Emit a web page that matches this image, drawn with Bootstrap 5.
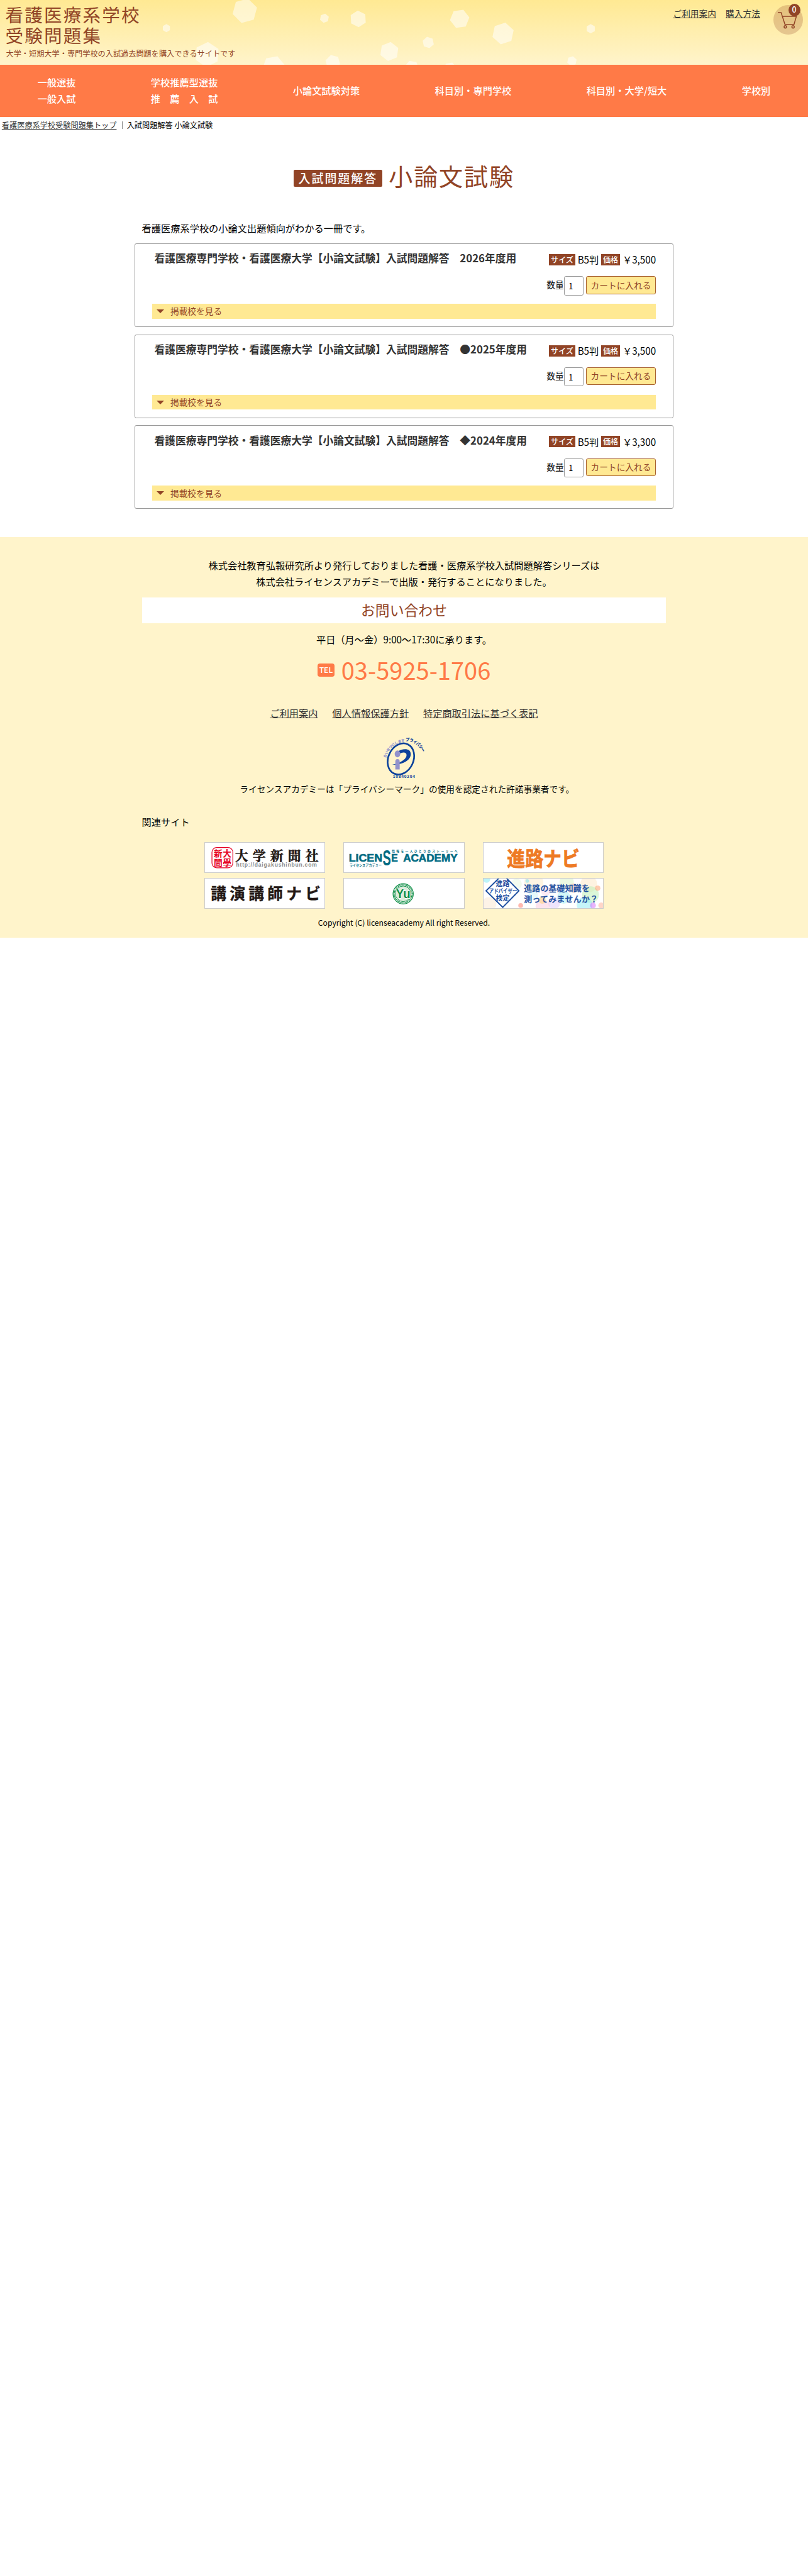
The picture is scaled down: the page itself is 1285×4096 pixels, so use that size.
<!DOCTYPE html>
<html lang="ja">
<head>
<meta charset="utf-8">
<meta name="viewport" content="width=device-width, initial-scale=1">
<title>入試問題解答 小論文試験 | 看護医療系学校受験問題集</title>
<link href="https://cdn.jsdelivr.net/npm/bootstrap@5.3.0/dist/css/bootstrap.min.css" rel="stylesheet">
<style>
/* 1rem = ten layout units */
html{font-size:9.5185px}
body{font-family:"Noto Sans CJK JP",sans-serif;font-size:1.6rem;line-height:2.8rem;color:#000;background:#fff;min-height:4096px}
a{color:#333}
a:hover{color:#914426}
.site-head{height:10.8rem;background:linear-gradient(#ffe993,#fff4cb)}
.hexes{left:0;top:0;width:100%;height:100%;pointer-events:none}
.brand{padding:.7rem 0 0 .9rem;color:#914426}
.brand-name{font-size:3rem;line-height:3.45rem;letter-spacing:.23rem;font-weight:400;margin:0}
.tagline{font-size:1.28rem;line-height:2rem;margin:.4rem 0 0 .1rem}
.head-links{font-size:1.44rem;gap:1.6rem;padding:.8rem 2.2rem 0 0;line-height:2.8rem}
.cart{width:5rem;height:5rem;margin:.8rem .8rem 0 0;background:rgba(145,68,38,.24)}
.cart svg{left:.8rem;top:1.1rem;width:3.2rem;height:3rem}
.cart-count{left:2.5rem;top:-.2rem;width:2rem;height:2.1rem;background:#914426;color:#fff;font-size:1.3rem;line-height:2rem;font-weight:500}
.main-nav{height:8.7rem;background:#ff7a47}
.main-nav a{color:#fff;font-weight:500;line-height:2.7rem}
.crumbs{font-size:1.28rem;line-height:2.8rem;height:2.8rem;padding-left:.3rem}
.crumbs i{width:1px;height:1.2rem;background:#888;margin:0 .7rem 0 .9rem}
.page-title{margin-top:3.9rem;height:6.4rem;color:#914426;font-size:4rem;line-height:6.4rem;letter-spacing:.2rem;font-weight:400;gap:1.1rem}
.page-title span{background:#914426;color:#fff;font-size:2rem;line-height:2.8rem;height:2.8rem;padding:0 .8rem;border-radius:2px;font-weight:500;margin-top:.8rem}
.wide{width:90rem}
.narrow{width:87.6rem}
.intro{margin-top:4.05rem;line-height:2.8rem;padding-left:1.2rem;margin-bottom:1.2rem}
.book{height:14rem;margin-bottom:1.2rem;border:1px solid #999;border-radius:.3rem;padding:1.1rem 2.8rem 0}
.book-title{font-size:1.76rem;line-height:2.6rem;font-weight:700;color:#333;padding-left:.4rem}
.spec{line-height:2.8rem;margin-top:.1rem;gap:.4rem}
.spec b{background:#914426;color:#fff;font-size:1.28rem;line-height:1.9rem;height:1.9rem;padding:0 .3rem;font-weight:500;margin-top:.1rem}
.buy{font-size:1.44rem;margin-top:1.4rem;height:3.3rem}
.buy input{width:3.3rem;height:3.2rem;border:1px solid #999;border-radius:.3rem;padding:0 0 0 .7rem;font-size:1.33rem;margin-right:.4rem}
.buy button{width:11.7rem;height:3rem;background:#ffe993;border:1px solid #a8602f;border-radius:.3rem;color:#914426;font-size:1.44rem;line-height:2.7rem;padding:0}
.schools{height:2.5rem;margin-top:1.3rem;background:#ffe993;color:#914426;font-size:1.44rem;line-height:2.4rem;padding-left:.8rem;gap:1rem}
.schools i{border:.7rem solid transparent;border-top-color:#914426;border-bottom:0}
.site-foot{margin-top:4.7rem;height:66.9rem;background:#fff4cb;padding-top:3.2rem}
.contact-head{height:4.3rem;margin:1.3rem auto 0;background:#fff;color:#914426;font-size:2.4rem;line-height:4.3rem;font-weight:400}
.hours{margin:1.2rem 0 0}
.tel{height:5rem;margin-top:1.2rem;color:#ff7a47;font-size:4rem;line-height:5rem;font-weight:400;gap:1.1rem}
.tel span{background:#ff7a47;color:#fff;font-size:1.28rem;line-height:2.2rem;width:2.9rem;height:2.2rem;border-radius:.4rem;font-weight:500;margin-top:.3rem}
.foot-links{gap:2.4rem;margin-top:3.3rem}
.pmark{width:7rem;height:7.4rem;margin-top:2.4rem;overflow:visible}
.pnote{font-size:1.44rem;line-height:2.4rem;margin:.3rem 0 0;padding-left:1rem}
.related{margin-top:2.9rem}
.banners{width:66.8rem;display:grid;grid-template-columns:repeat(3,20.2rem);column-gap:3.1rem;row-gap:.8rem;margin-top:2rem}
.banners svg{display:block;width:20.2rem;height:5.2rem;border:1px solid #ccc;background:#fff}
.copy{font-size:1.28rem;margin-top:.9rem}
</style>
</head>
<body>
<header class="site-head position-relative d-flex overflow-hidden">
  <svg class="hexes position-absolute" viewBox="0 0 1350 108" fill="#fff" fill-opacity=".55">
    <defs><path id="hx" d="M0-10L8.7-5V5L0 10-8.7 5V-5z"/></defs>
    <use href="#hx" transform="translate(409 18) rotate(15) scale(2.1)" fill-opacity=".5"/>
    <use href="#hx" transform="translate(278 47) scale(.68)"/>
    <use href="#hx" transform="translate(346 91) rotate(4) scale(2.1)"/>
    <use href="#hx" transform="translate(457 112) rotate(20) scale(1.9)"/>
    <use href="#hx" transform="translate(542 30.5) rotate(10) scale(.77)"/>
    <use href="#hx" transform="translate(598.5 31.5) rotate(-3) scale(1.4)"/>
    <use href="#hx" transform="translate(556 104) rotate(-15) scale(1.25)"/>
    <use href="#hx" transform="translate(650.5 86) rotate(8) scale(1.6)"/>
    <use href="#hx" transform="translate(715.5 71) rotate(-12) scale(.97)"/>
    <use href="#hx" transform="translate(768 31.5) rotate(22) scale(1.63)"/>
    <use href="#hx" transform="translate(840.5 56) rotate(12) scale(1.85)"/>
    <use href="#hx" transform="translate(688 113) rotate(-20) scale(1.2)"/>
    <use href="#hx" transform="translate(752 115) rotate(20) scale(1.1)"/>
    <use href="#hx" transform="translate(987 48) scale(.78)"/>
    <use href="#hx" transform="translate(955.6 102) rotate(12) scale(.82)"/>
  </svg>
  <div class="brand position-relative me-auto">
    <p class="brand-name">看護医療系学校<br>受験問題集</p>
    <p class="tagline">大学・短期大学・専門学校の入試過去問題を購入できるサイトです</p>
  </div>
  <div class="head-links position-relative d-flex"><a href="#">ご利用案内</a><a href="#">購入方法</a></div>
  <a href="#" class="cart rounded-circle position-relative flex-shrink-0" aria-label="カート">
    <svg class="position-absolute" viewBox="0 0 32 30" fill="none" stroke="#914426" stroke-width="1.6"><path d="M0 2H5.500L12 22H27L31 8.500H8M12 22"/><circle cx="12.500" cy="26" r="2"/><circle cx="25.500" cy="26" r="2"/></svg>
    <span class="cart-count position-absolute rounded-circle text-center">0</span>
  </a>
</header>
<nav class="main-nav d-flex justify-content-around align-items-center">
  <a class="text-decoration-none" href="#">一般選抜<br>一般入試</a>
  <a class="text-decoration-none" href="#">学校推薦型選抜<br>推　薦　入　試</a>
  <a class="text-decoration-none" href="#">小論文試験対策</a>
  <a class="text-decoration-none" href="#">科目別・専門学校</a>
  <a class="text-decoration-none" href="#">科目別・大学/短大</a>
  <a class="text-decoration-none" href="#">学校別</a>
</nav>
<div class="crumbs d-flex align-items-center"><a href="#">看護医療系学校受験問題集トップ</a><i></i><span>入試問題解答 小論文試験</span></div>

<main>
  <h1 class="page-title d-flex justify-content-center align-items-center mb-0"><span>入試問題解答</span>小論文試験</h1>
  <div class="wide mx-auto">
    <p class="intro">看護医療系学校の小論文出題傾向がわかる一冊です。</p>
    <section class="book">
      <div class="d-flex justify-content-between">
        <h2 class="book-title mb-0">看護医療専門学校・看護医療大学【小論文試験】入試問題解答　2026年度用</h2>
        <div class="spec d-flex align-items-center"><b>サイズ</b><span>B5判</span><b>価格</b><span>￥3,500</span></div>
      </div>
      <div class="buy d-flex justify-content-end"><label>数量</label><input value="1" aria-label="数量"><button type="button">カートに入れる</button></div>
      <div class="schools d-flex align-items-center"><i></i>掲載校を見る</div>
    </section>
    <section class="book">
      <div class="d-flex justify-content-between">
        <h2 class="book-title mb-0">看護医療専門学校・看護医療大学【小論文試験】入試問題解答　●2025年度用</h2>
        <div class="spec d-flex align-items-center"><b>サイズ</b><span>B5判</span><b>価格</b><span>￥3,500</span></div>
      </div>
      <div class="buy d-flex justify-content-end"><label>数量</label><input value="1" aria-label="数量"><button type="button">カートに入れる</button></div>
      <div class="schools d-flex align-items-center"><i></i>掲載校を見る</div>
    </section>
    <section class="book">
      <div class="d-flex justify-content-between">
        <h2 class="book-title mb-0">看護医療専門学校・看護医療大学【小論文試験】入試問題解答　◆2024年度用</h2>
        <div class="spec d-flex align-items-center"><b>サイズ</b><span>B5判</span><b>価格</b><span>￥3,300</span></div>
      </div>
      <div class="buy d-flex justify-content-end"><label>数量</label><input value="1" aria-label="数量"><button type="button">カートに入れる</button></div>
      <div class="schools d-flex align-items-center"><i></i>掲載校を見る</div>
    </section>
  </div>
</main>

<footer class="site-foot text-center">
  <p class="mb-0">株式会社教育弘報研究所より発行しておりました看護・医療系学校入試問題解答シリーズは<br>株式会社ライセンスアカデミーで出版・発行することになりました。</p>
  <h2 class="contact-head narrow">お問い合わせ</h2>
  <p class="hours">平日（月～金）9:00～17:30に承ります。</p>
  <div class="tel d-flex justify-content-center align-items-center"><span>TEL</span>03-5925-1706</div>
  <div class="foot-links d-flex justify-content-center"><a href="#">ご利用案内</a><a href="#">個人情報保護方針</a><a href="#">特定商取引法に基づく表記</a></div>
  <svg class="pmark d-block mx-auto" viewBox="0 0 70 74">
    <defs><path id="arcL" d="M5 38Q11 13 42 9.500"/><path id="arcR" d="M38 10Q56 9 67 30"/></defs>
    <ellipse cx="30" cy="39.700" rx="21" ry="27" fill="none" stroke="#0b419b" stroke-width="2.800" transform="rotate(25 30 39.700)"/>
    <path d="M25 27C31 22.500 47 20 46.500 32C46 42 34 49 15.500 49.500C30 46 39.500 40 39.500 33C39 27 31 28.500 27 31.500z" fill="#0b419b"/>
    <ellipse cx="24.300" cy="31.300" rx="4.700" ry="5.700" fill="#9292cc"/><path d="M20.700 44Q20.700 40 24.300 40Q28 40 28 44V57.300H20.700z" fill="#9292cc"/>
    <text font-size="5.600" font-weight="700" fill="#9292cc" stroke="#9292cc" stroke-width=".3"><textPath href="#arcL">たいせつにします</textPath></text>
    <text font-size="7" font-weight="700" fill="#0b419b" stroke="#0b419b" stroke-width=".3"><textPath href="#arcR" textLength="36" lengthAdjust="spacingAndGlyphs">プライバシー</textPath></text>
    <text x="16.500" y="71" font-family="Liberation Sans" font-weight="700" font-size="7" fill="#0b419b" textLength="37">10840204</text>
  </svg>
  <p class="pnote">ライセンスアカデミーは「プライバシーマーク」の使用を認定された許諾事業者です。</p>
  <div class="narrow mx-auto text-start related">関連サイト</div>
  <div class="banners mx-auto text-start">
    <svg viewBox="1 1 200 50">
      <rect x="12.500" y="9" width="35" height="34" rx="8" fill="#fff" stroke="#e60022" stroke-width="1.300"/>
      <g fill="#e60022" font-weight="700" font-size="14.500"><text x="15.500" y="24">新</text><text x="30.500" y="24">大</text><text x="15.500" y="39.500">聞</text><text x="30.500" y="39.500">學</text></g>
      <text x="51" y="30" font-family="'Noto Serif CJK JP','Noto Sans CJK JP'" font-weight="700" font-size="22" fill="#1f1714" stroke="#1f1714" stroke-width=".5" textLength="140">大学新聞社</text>
      <text x="53" y="41" font-family="Liberation Sans" font-weight="700" font-size="9" fill="#888" textLength="135">http://daigakushinbun.com</text>
    </svg>
    <svg viewBox="1 1 200 50" fill="#006b83" font-family="Liberation Sans" font-weight="700">
      <text x="9" y="32.500" font-size="17.500" stroke="#006b83" stroke-width=".6" textLength="56" lengthAdjust="spacingAndGlyphs">LICEN</text>
      <text x="65.500" y="39" font-size="36" textLength="14" lengthAdjust="spacingAndGlyphs">S</text>
      <text x="80" y="32.500" font-size="17.500" stroke="#006b83" stroke-width=".6" textLength="11" lengthAdjust="spacingAndGlyphs">E</text>
      <text x="100" y="32.500" font-size="17.500" stroke="#006b83" stroke-width=".6" textLength="91" lengthAdjust="spacingAndGlyphs">ACADEMY</text>
      <g font-family="Noto Sans CJK JP"><text x="10" y="41" font-size="5.500" textLength="54">ライセンスアカデミー</text><text x="81" y="16.500" font-size="5" textLength="110">情報を一人ひとりのストーリーへ</text></g>
    </svg>
    <svg viewBox="1 1 200 50"><text x="40" y="39.500" font-weight="700" font-size="34" fill="#ee7a24" stroke="#ee7a24" stroke-width=".8" textLength="122" lengthAdjust="spacingAndGlyphs">進路ナビ</text></svg>
    <svg viewBox="1 1 200 50"><text x="10.500" y="36" font-weight="700" font-size="26" fill="#231815" stroke="#231815" stroke-width=".4" textLength="184">講演講師ナビ</text></svg>
    <svg viewBox="1 1 200 50">
      <circle cx="100" cy="26.500" r="17" fill="none" stroke="#0a8c43" stroke-width="1.200"/><circle cx="100" cy="26.500" r="15" fill="none" stroke="#0a8c43" stroke-width="2" stroke-dasharray="1.300 .8"/><circle cx="100" cy="26.500" r="13" fill="#dcebdc" stroke="#0a8c43" stroke-width="1"/>
      <text x="88" y="34" font-family="Liberation Sans" font-weight="700" font-size="21" fill="#0a8c43" stroke="#fff" stroke-width="1.500" paint-order="stroke" textLength="24" lengthAdjust="spacingAndGlyphs">Yu</text>
    </svg>
    <svg viewBox="1 1 200 50">
      <g fill-opacity=".5"><circle cx="6" cy="2" r="6" fill="#7beaf5"/><circle cx="85" cy="8" r="16" fill="#fdebc8"/><circle cx="140" cy="7" r="12" fill="#d9f4c5"/><circle cx="177" cy="10" r="14" fill="#fde8c4"/><circle cx="180" cy="28" r="14" fill="#b8efb2"/><circle cx="152" cy="17" r="8" fill="#ffc0a8"/><circle cx="170" cy="45" r="13" fill="#8eebf4"/><circle cx="119" cy="42" r="10" fill="#ddc9fa"/><circle cx="100" cy="48" r="12" fill="#fac8de"/><circle cx="99" cy="37" r="6" fill="#ffd06a"/><circle cx="63" cy="46" r="4" fill="#ff7360"/><circle cx="192" cy="17" r="4.500" fill="#ff9a63"/><circle cx="135" cy="32" r="11" fill="#a7f1f4"/><circle cx="184" cy="46" r="5" fill="#d36bfa"/><circle cx="84" cy="29" r="8" fill="#ccf3f6"/><circle cx="105" cy="22" r="8" fill="#f9d7ec"/><circle cx="10" cy="44" r="12" fill="#fce7d0"/><circle cx="56" cy="10" r="9" fill="#e6f7e0"/><circle cx="74" cy="5" r="3" fill="#71dff2"/><circle cx="198" cy="46" r="5" fill="#ffab91"/></g>
      <path d="M33-6L60 21.500 33 49 5 21.500z" fill="#fff" stroke="#1b4da0" stroke-width="2"/>
      <g fill="#1b4da0" font-weight="700"><text x="21.500" y="14" font-size="11.500" textLength="23">進路</text><text x="10" y="25.500" font-size="10" textLength="47" lengthAdjust="spacingAndGlyphs">アドバイザー</text><text x="21.500" y="37.500" font-size="11.500" textLength="23">検定</text>
      <g font-weight="500" font-size="13.500" stroke="#1b4da0" stroke-width=".3"><text x="68.500" y="22.500" textLength="110">進路の基礎知識を</text><text x="68.500" y="39.500" textLength="124">測ってみませんか？</text></g></g>
    </svg>
  </div>
  <p class="copy mb-0">Copyright (C) licenseacademy All right Reserved.</p>
</footer>
<script src="https://cdn.jsdelivr.net/npm/bootstrap@5.3.0/dist/js/bootstrap.bundle.min.js"></script>
</body>
</html>
